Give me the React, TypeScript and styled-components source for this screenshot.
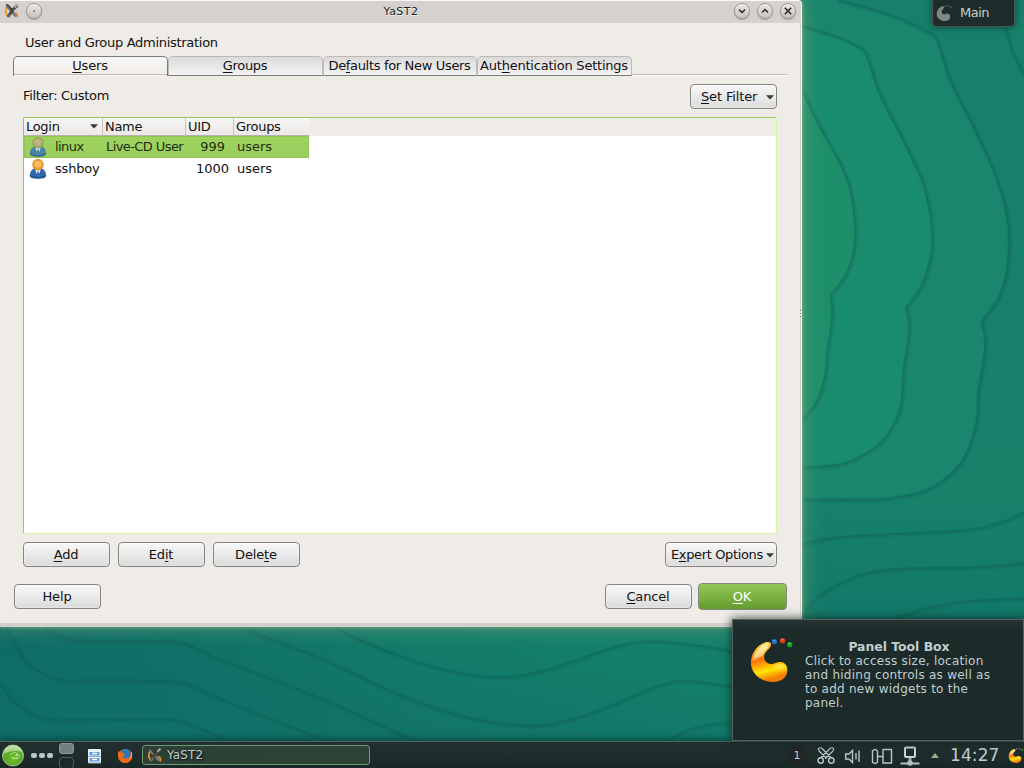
import React from "react";
import styled, { createGlobalStyle, css } from "styled-components";

const Global = createGlobalStyle`
  html, body { margin: 0; padding: 0; }
  body { font-family: "DejaVu Sans", sans-serif; font-size: 13px; overflow: hidden; }
  * { box-sizing: border-box; }
`;

const Desktop = styled.div`
  position: relative;
  width: 1024px;
  height: 768px;
  overflow: hidden;
  background: #137a69;
`;
const Wallpaper = styled.svg`
  position: absolute;
  inset: 0;
  display: block;
`;

/* ---------- window ---------- */
const WindowFrame = styled.section`
  position: absolute;
  left: 0;
  top: 0;
  width: 802px;
  height: 627px;
  display: flex;
  flex-direction: column;
  background: #efebe7;
  border-top: 1px solid #faf9f8;
  border-right: 1px solid #f7f6f4;
  border-radius: 0 4px 3px 0;
  box-shadow: 0 0 4px rgba(160, 195, 135, 0.75), 0 0 20px 1px rgba(135, 165, 130, 0.55);
  color: #111;
`;
const TitleBar = styled.header`
  display: flex;
  align-items: center;
  height: 22px;
  flex: none;
  padding: 0 5px 3px 4px;
  background: #d5d1ce;
  border-radius: 0 3px 0 0;
`;
const TitleText = styled.div`
  flex: 1;
  text-align: center;
  font-size: 11px;
  letter-spacing: 0.5px;
  color: #222;
  text-shadow: 0 1px 0 #f4f2f0;
  padding: 1px 0 0 26px;
`;
const TitleButtons = styled.div`
  display: flex;
  gap: 7px;
`;
const RoundButton = styled.span<{ $menu?: boolean }>`
  width: 16px;
  height: 16px;
  border-radius: 50%;
  display: flex;
  background: linear-gradient(#e9e7e5, #c5c2bf);
  border: 1px solid #9a9896;
  box-shadow: 0 1px 1px rgba(0, 0, 0, 0.25), inset 0 1px 0 #f6f5f4;
  svg { display: block; }
  ${(p) =>
    p.$menu &&
    css`
      margin-left: 6px;
      background: radial-gradient(circle, #777 0 0.6px, transparent 1px), linear-gradient(#e9e7e5, #c5c2bf);
    `}
`;
const WindowBody = styled.div`
  flex: 1;
  border-right: 1px solid #d0cdca;
  padding: 13px 13px 0 13px;
  display: flex;
  flex-direction: column;
`;
const BottomEdge = styled.div`
  height: 4px;
  flex: none;
  background: #d3cfcc;
  border-radius: 0 0 3px 0;
`;
const Heading = styled.div`
  height: 20px;
  line-height: 14px;
  padding-left: 12px;
  letter-spacing: -0.29px;
`;
const TabRow = styled.div`
  display: flex;
  height: 20px;
`;
const Tab = styled.div<{ $active?: boolean; $width: number; $tracking: number }>`
  width: ${(p) => p.$width}px;
  letter-spacing: ${(p) => p.$tracking}px;
  height: 20px;
  line-height: 18px;
  text-align: center;
  white-space: nowrap;
  padding-right: 1px;
  border: 1px solid #bcbab7;
  border-bottom-color: #7d7b7a;
  border-radius: 5px 5px 0 0;
  background: linear-gradient(#dcdbda, #f4f3f3);
  ${(p) =>
    p.$active &&
    css`
      border-color: #7d7b7a;
      border-bottom: 0;
      background: linear-gradient(#f8f7f6, #efebe7);
      box-shadow: inset 0 -1px 0 #f6f4f2, inset 0 -2px 0 #bdbab8;
    `}
`;
const TabLine = styled.div`
  flex: 1;
  align-self: flex-end;
  height: 2px;
  border-top: 1px solid #b8b6b4;
  background: #fff;
`;
const FilterRow = styled.div`
  display: flex;
  justify-content: space-between;
  height: 41px;
  padding: 8px 10px 0;
`;
const FilterText = styled.span`
  line-height: 25px;
  margin-top: -1px;
  letter-spacing: -0.3px;
`;

const Button = styled.button<{ $width?: number; $primary?: boolean; $menu?: boolean }>`
  width: ${(p) => p.$width ?? 87}px;
  height: ${(p) => (p.$primary ? 27 : 25)}px;
  flex: none;
  display: flex;
  align-items: center;
  justify-content: center;
  padding: 0 1px 1px 0;
  font: 13px "DejaVu Sans", sans-serif;
  letter-spacing: -0.15px;
  white-space: nowrap;
  color: #111;
  border: 1px solid #858483;
  border-radius: 4px;
  background: linear-gradient(#f8f8f8, #dcdbdb);
  box-shadow: inset 0 0 0 1px rgba(255, 255, 255, 0.25);
  ${(p) =>
    p.$primary &&
    css`
      color: #fff;
      border-color: #82887c;
      background: linear-gradient(#92ca55, #659c30);
      box-shadow: none;
    `}
  ${(p) =>
    p.$menu &&
    css`
      justify-content: space-between;
      letter-spacing: ${p.$width === 87 ? -0.15 : -0.36}px;
      padding: 0 2px 1px ${p.$width === 87 ? 10 : 5}px;
      svg { margin-top: 2px; }
    `}
`;
const Underlined = styled.span`
  text-decoration: underline;
  text-decoration-thickness: 1px;
  text-underline-offset: 2px;
  text-decoration-skip-ink: none;
`;

const Table = styled.div`
  margin: 0 10px;
  width: 754px;
  height: 417px;
  border: 1px solid #d3f5a0;
  border-top-color: #96cb5a;
  border-left-color: #96cb5a;
  border-radius: 2px;
  background: #fff;
`;
const tableColumns = "79px 83px 48px 75px";
const HeaderRow = styled.div`
  display: grid;
  grid-template-columns: ${tableColumns};
  height: 18px;
  background: #efebe7;
`;
const HeaderCell = styled.div<{ $last?: boolean }>`
  display: flex;
  align-items: center;
  justify-content: space-between;
  padding: 0 4px 0 2px;
  line-height: 16px;
  letter-spacing: -0.3px;
  border-right: ${(p) => (p.$last ? "0" : "1px solid #c6c4c2")};
  border-bottom: 1px solid #b5b3b1;
  background: linear-gradient(#f8f7f6, #ebe8e6);
`;
const DataRow = styled.div<{ $selected?: boolean }>`
  display: grid;
  grid-template-columns: ${tableColumns};
  width: 285px;
  height: 22px;
  line-height: 21px;
  color: ${(p) => (p.$selected ? "#1f3010" : "#111")};
  background: ${(p) => (p.$selected ? "linear-gradient(#9fd360, #9acd5b)" : "#fff")};
  ${(p) => p.$selected && "box-shadow: inset 0 0 0 1px #92c654;"}
`;
const Cell = styled.div<{ $right?: number; $tracking?: number }>`
  display: flex;
  white-space: nowrap;
  justify-content: ${(p) => (p.$right ? "flex-end" : "flex-start")};
  padding-left: 3px;
  padding-right: ${(p) => p.$right ?? 0}px;
  letter-spacing: ${(p) => p.$tracking ?? 0}px;
`;
const IconSlot = styled.span`
  width: 26px;
  margin-left: 2px;
  flex: none;
  svg { display: block; }
`;
const ActionRow = styled.div`
  display: flex;
  gap: 8px;
  padding: 8px 10px 0;
`;
const DialogRow = styled.div`
  display: flex;
  align-items: center;
  height: 27px;
  margin-top: 16px;
  padding-left: 1px;
`;
const OkSlot = styled.span`
  margin-left: 6px;
`;
const Spacer = styled.span`
  flex: 1;
`;
const ResizeGrip = styled.div`
  position: absolute;
  left: 800px;
  top: 309px;
  width: 1px;
  height: 7px;
  background: repeating-linear-gradient(#666 0 1px, #efebe7 1px 3px);
`;

/* ---------- desktop widgets ---------- */
const ActivityTab = styled.div`
  position: absolute;
  left: 932px;
  top: -4px;
  width: 83px;
  height: 31px;
  display: flex;
  align-items: center;
  gap: 7px;
  padding: 2px 0 0 3px;
  letter-spacing: -0.5px;
  color: #c3d0cf;
  background: #1e2c2b;
  border: 1px solid #4a5655;
  border-radius: 4px;
  box-shadow: 0 0 7px rgba(0, 35, 30, 0.6);
`;
const Tooltip = styled.aside`
  position: absolute;
  left: 732px;
  top: 619px;
  width: 292px;
  height: 122px;
  display: flex;
  padding: 16px 30px 0 16px;
  color: #c0cfce;
  background: linear-gradient(#2a3333, #1d2a2a 9px);
  border: 1px solid #53605f;
  box-shadow: 0 0 9px 1px rgba(10, 30, 26, 0.7);
`;
const TooltipText = styled.div`
  width: 188px;
  margin-left: 10px;
  padding-top: 4px;
  font-size: 12px;
  line-height: 14px;
  letter-spacing: 0.25px;
  white-space: nowrap;
`;
const TooltipTitle = styled.div`
  font-weight: bold;
  font-size: 12.4px;
  letter-spacing: 0;
  text-align: center;
`;
const Panel = styled.footer`
  position: absolute;
  left: 0;
  top: 741px;
  width: 1024px;
  height: 27px;
  display: flex;
  align-items: center;
  background: linear-gradient(#223130, #1a2727);
  border-top: 1px solid #52605f;
  box-shadow: 0 -1px 9px rgba(0, 50, 45, 0.8);
  color: #c0cfce;
  svg { display: block; flex: none; }
`;
const TaskButton = styled.div`
  width: 228px;
  height: 20px;
  margin-left: 10px;
  display: flex;
  align-items: center;
  gap: 4px;
  padding-left: 4px;
  font-size: 12px;
  letter-spacing: 0.15px;
  border: 1px solid #6f9972;
  border-radius: 3px;
  background: linear-gradient(90deg, #2d4036, #2f4238);
  text-shadow: 1px 1px 2px #000;
`;
const Pager = styled.div`
  width: 20px;
  height: 20px;
  border-radius: 50%;
  background: #232625;
  font-size: 11px;
  line-height: 20px;
  text-align: center;
  margin: 2px 9px 0 0;
`;
const Clock = styled.span`
  font-size: 17px;
  letter-spacing: 0.1px;
  width: 52px;
  white-space: nowrap;
  line-height: 20px;
  margin: -1px 6px 0 10px;
`;

/* ---------- wallpaper contours ---------- */
type Pt = [number, number];
const spline = (pts: Pt[]) => {
  let d = "";
  for (let i = 0; i < pts.length - 1; i++) {
    const a = pts[Math.max(0, i - 1)];
    const b = pts[i];
    const c = pts[i + 1];
    const e = pts[Math.min(pts.length - 1, i + 2)];
    d += ` C${b[0] + (c[0] - a[0]) / 6} ${b[1] + (c[1] - a[1]) / 6} ${c[0] - (e[0] - b[0]) / 6} ${c[1] - (e[1] - b[1]) / 6} ${c[0]} ${c[1]}`;
  }
  return d;
};
const trace = (...parts: Pt[][]) => `M${parts[0][0].join(" ")}` + parts.map(spline).join("");

const inner = trace(
  [[790, 60], [803, 92], [820, 127], [840, 163], [850, 190], [855, 230], [852, 258], [844, 277], [830, 295]],
  [[830, 295], [832, 316], [827, 353], [825, 375], [817, 400], [803, 419], [790, 430]]
);
const middle = trace(
  [[780, 20], [803, 26], [840, 38], [860, 48], [867, 57], [880, 95], [903, 140], [924, 187], [932, 235], [928, 267], [918, 291], [906, 307]],
  [[906, 307], [909, 330], [903, 373], [901, 403], [892, 427], [876, 446], [850, 461], [825, 466], [790, 467]]
);
const outer = trace(
  [[838, 0], [890, 15], [928, 32], [937, 41], [950, 80], [975, 130], [997, 180], [1008, 225], [1007, 268], [998, 298], [981, 321]],
  [[981, 321], [985, 345], [978, 393], [976, 423], [961, 462], [930, 488], [890, 498], [850, 499], [780, 499]]
);
const lines: string[] = [
  trace([[998, 0], [1005, 27], [1013, 53], [1030, 85]]),
  trace([[790, 548], [802, 544], [840, 537], [930, 532], [973, 529], [1007, 520], [1030, 508]]),
  trace([[795, 624], [802, 613], [827, 590], [867, 573], [913, 568], [980, 567], [1030, 562]]),
  trace([[885, 624], [893, 619], [930, 607], [967, 601], [1030, 598]]),
  trace([[320, 620], [360, 640], [400, 656], [450, 671], [497, 677], [533, 673], [567, 663], [617, 646], [653, 641], [687, 644], [740, 652]]),
  trace([[225, 620], [240, 627], [320, 658], [400, 695], [467, 717], [523, 725], [560, 722], [607, 707], [660, 685], [690, 681], [740, 688]]),
  trace([[40, 622], [50, 632], [67, 639], [87, 641], [150, 641], [183, 643], [217, 658], [320, 698], [400, 734], [420, 742]]),
  trace([[2, 620], [20, 653], [37, 670], [63, 680], [100, 680], [167, 681], [190, 685], [233, 704], [330, 742]]),
  trace([[-5, 678], [17, 704], [47, 719], [100, 719], [157, 719], [187, 723], [230, 742]]),
  trace([[663, 742], [693, 728], [732, 722], [760, 722]]),
];

const Contours = () => (
  <Wallpaper width="1024" height="768">
    <defs>
      <linearGradient id="land" x1="500" y1="620" x2="470" y2="750" gradientUnits="userSpaceOnUse">
        <stop offset="0" stopColor="#14806a" />
        <stop offset=".5" stopColor="#127a69" />
        <stop offset="1" stopColor="#127468" />
      </linearGradient>
      <linearGradient id="west" x1="0" y1="0" x2="420" y2="0" gradientUnits="userSpaceOnUse">
        <stop offset="0" stopColor="#0d6a67" stopOpacity=".75" />
        <stop offset="1" stopColor="#0d6a67" stopOpacity="0" />
      </linearGradient>
      <linearGradient id="east" x1="0" y1="0" x2="0" y2="768" gradientUnits="userSpaceOnUse">
        <stop offset="0" stopColor="#17806b" />
        <stop offset=".65" stopColor="#17816a" />
        <stop offset=".82" stopColor="#127869" />
        <stop offset="1" stopColor="#107068" />
      </linearGradient>
      <filter id="soft" x="0" y="0" width="1024" height="768" filterUnits="userSpaceOnUse">
        <feGaussianBlur stdDeviation="1.1" />
      </filter>
    </defs>
    <rect width="1024" height="768" fill="url(#land)" />
    <rect y="600" width="420" height="168" fill="url(#west)" />
    <rect x="790" width="234" height="768" fill="url(#east)" />
    <path d={`${outer} L780 0Z`} fill="#19866d" />
    <path d={`${middle} Z`} fill="#1a8c6e" />
    <path d={`${inner} Z`} fill="#1d906b" />
    <g fill="none" strokeLinejoin="round">
      <g stroke="#0b564d" strokeWidth="2.2" opacity=".45" filter="url(#soft)" transform="translate(1 1)">
        {[inner, middle, outer, ...lines].map((d, i) => <path key={i} d={d} />)}
      </g>
      <g stroke="#0d6257" strokeWidth="1" opacity=".4">
        {[inner, middle, outer, ...lines].map((d, i) => <path key={i} d={d} />)}
      </g>
    </g>
  </Wallpaper>
);

/* ---------- icons ---------- */
const XIcon = () => (
  <svg width="16" height="16" viewBox="0 0 16 16">
    <path d="M3.500 4Q.5 8 2.500 11L4 14M11.500 9.500q3 1.500 1.500 5" fill="none" stroke="#f3952c" strokeWidth="1.700" />
    <path d="M2.500 2.200l4.500 5 5 6" fill="none" stroke="#77726c" strokeWidth="3" />
    <path d="M13.500 2.200L8.500 7l-4.500 7" fill="none" stroke="#4a4744" strokeWidth="3" />
    <path d="M2 1.500l2.500 1L8 7" fill="none" stroke="#35312e" strokeWidth="1.300" />
    <path d="M13.500 1.700l-3 3" stroke="#b4afa9" strokeWidth="1.800" />
    <path d="M6 11l-1.500 3M10 10l2.500 3.500" stroke="#8f8984" strokeWidth="1" />
  </svg>
);
const ArrowSvg = styled.svg`
  flex: none;
  display: block;
`;
const Arrow = () => (
  <ArrowSvg width="8" height="5" viewBox="0 0 8 5">
    <path d="M0 .3h8L4 4.500z" fill="#3b3b3b" />
  </ArrowSvg>
);
const UserIcon = ({ dim }: { dim?: boolean }) => (
  <svg width="18" height="22" viewBox="0 0 18 22">
    <ellipse cx="9" cy="19.800" rx="7.500" ry="1.500" fill="#000" opacity=".25" />
    <path d="M.8 17.500C1 13.500 3.500 9.500 9 9.500s8 4 8.200 8c0 2-2.700 3-8.200 3s-8.200-1-8.200-3z" fill={dim ? "#4785a6" : "#2f68ac"} />
    <path d="M1.500 17.500q1 2 7.500 2t7.500-2" fill="none" stroke={dim ? "#2f6d92" : "#1a4b8c"} strokeWidth="1.400" />
    <path d="M5.800 10.500h6.400L9 19z" fill={dim ? "#d3e3dc" : "#f0f4fa"} />
    <path d="M9 12l1.200 4.500L9 19l-1.200-2.500z" fill={dim ? "#3f7fa2" : "#2c62a8"} />
    <circle cx="9" cy="6.600" r="5.400" fill={dim ? "#aaa465" : "#ee9a26"} stroke={dim ? "#92a055" : "#d98b26"} strokeWidth=".7" />
    <ellipse cx="9" cy="6.300" rx="3.600" ry="3.300" fill={dim ? "#bdb683" : "#fbc066"} />
  </svg>
);
const Cashew = ({ size, mono }: { size: number; mono?: boolean }) => (
  <svg width={size} height={size} viewBox="0 0 48 48">
    <defs>
      <linearGradient id="cashewFill" x1="0" y1="0" x2=".25" y2="1">
        <stop offset="0" stopColor="#ffee62" />
        <stop offset=".3" stopColor="#ffa51c" />
        <stop offset=".48" stopColor="#fd7208" />
        <stop offset=".78" stopColor="#ffe500" />
        <stop offset="1" stopColor="#f67c08" />
      </linearGradient>
      <linearGradient id="cashewGloss" x1="0" y1="0" x2="0" y2="1">
        <stop offset="0" stopColor="#fff8b0" stopOpacity=".9" />
        <stop offset="1" stopColor="#fff" stopOpacity=".1" />
      </linearGradient>
    </defs>
    <path d="M21 6.500C14 5 2 15 2 28c0 11 10 20 23 20 10 0 15.500-6 15-13.500C39.500 28 33.500 25.500 28 28 21 31.500 14.500 27 16 20c1-5 7-7 7-11 0-1.500-.7-2.300-2-2.500z" fill={mono ? "#7e8786" : "url(#cashewFill)"} />
    {!mono && <path d="M20 7.500C13 9 4 18 4 27c4-6 9-4 11-8 2-4 7-8 5-11.500zM25 31c5-3 13-3 13.500 5-4 2-10-1-13.500-5z" fill="url(#cashewGloss)" />}
    <circle cx="26.500" cy="6" r="2.800" fill={mono ? "#4c5756" : "#2969c4"} />
    <circle cx="35" cy="5" r="2.800" fill={mono ? "#4c5756" : "#da3d19"} />
    <circle cx="42.500" cy="9" r="2.800" fill={mono ? "#4c5756" : "#14a318"} />
    {!mono && <path d="M25.500 5h2M34 4h2M41.500 8h2" stroke="#fff" strokeOpacity=".6" />}
  </svg>
);
const Launcher = () => (
  <svg width="26" height="26" viewBox="0 0 26 26">
    <defs>
      <radialGradient id="suse" cx=".5" cy=".65" r=".6">
        <stop offset="0" stopColor="#6fbd28" />
        <stop offset=".7" stopColor="#58a626" />
        <stop offset="1" stopColor="#a4cf82" />
      </radialGradient>
    </defs>
    <circle cx="13" cy="13.500" r="10.500" fill="url(#suse)" stroke="#bcd8a6" strokeWidth=".8" />
    <path d="M4 11.500Q6 3.500 13 3.500t8.500 6Q13 8 4 11.500z" fill="#d9edca" opacity=".6" />
    <path d="M10 12.500q5-3.500 8.500-.5 2 3-.5 4.500-3 1-6.500-1 3 1 6.500.3" fill="none" stroke="#b6df94" strokeWidth="1" />
    <circle cx="16.500" cy="13" r="1.100" fill="#d3ecbc" />
  </svg>
);
const QuickLaunch = () => (
  <svg width="106" height="26" viewBox="26 742 106 26">
    <g fill="#b9c7c6">
      <rect x="31" y="753" width="6" height="5" rx="2" />
      <rect x="39" y="753" width="6" height="5" rx="2" />
      <rect x="47" y="753" width="6" height="5" rx="2" />
    </g>
    <rect x="59.500" y="743.500" width="14" height="10" rx="2.500" fill="#728180" stroke="#8d9a99" />
    <rect x="59.500" y="757.500" width="14" height="11" rx="3" fill="#1c2928" stroke="#536160" />
    <rect x="88" y="749" width="13" height="14" rx="1" fill="#edf3f9" />
    <path d="M89.500 752h10v3.500h-10zM89.500 758h10v3.500h-10z" fill="#5c9be0" />
    <path d="M88 756.500h13M88 763h13" stroke="#98a8b8" />
    <path d="M92 753.500h5M92 759.500h5" stroke="#fff" strokeWidth="1.500" />
    <circle cx="125" cy="756" r="7" fill="#e35c12" />
    <circle cx="125.500" cy="754" r="5.200" fill="#2c77b8" />
    <path d="M118.500 751c-2 7 2 12 6.500 12 5 0 8-4 7-9-1 3-3 4.500-6 4.500-2 0-3.500-1-3.500-2.500l2.500-1c-.5-2-3-1.500-3.500-3-1-.2-2-.2-3-1z" fill="#ec6a16" />
    <path d="M130 750q3 5-1 9 4-1 3-6z" fill="#ffc63a" />
  </svg>
);
const TrayIcons = () => (
  <svg width="124" height="26" viewBox="816 742 124 26" fill="none" stroke="#b8c7c5" strokeWidth="1.400">
    <path d="M818.500 748.500q2-1.500 3.500 0l9.500 9.500M833.500 748.500q-2-1.500-3.500 0l-9.500 9.500M818.500 748.500q-.5 1.500 1 3l7.500 7M833.500 748.500q.5 1.500-1 3l-7.500 7" strokeWidth="1.200" />
    <circle cx="820.700" cy="760.500" r="2.700" />
    <circle cx="831.300" cy="760.500" r="2.700" />
    <path d="M845.700 754h3.300l3.500-3.500v12l-3.500-3.500h-3.300z" />
    <path d="M856 753v6.500M859 750.500v11.500" />
    <path d="M872.500 751q2.500-3 5 0v11q-2.500 3-5 0zM877.500 756.500h5M883 749.500h8.500v13.500h-8.500z" />
    <rect x="905" y="747.500" width="10" height="9.500" rx="1" stroke="#cbd4d3" strokeWidth="2" />
    <path d="M910 758v5" stroke="#9ba7a6" strokeWidth="3" />
    <path d="M900.500 763.500h19" stroke="#b8c1c0" strokeWidth="2" />
    <circle cx="910" cy="763" r="2.700" fill="#b6bfbe" stroke="none" />
    <path d="M931 758h8l-4-5z" fill="#8db584" stroke="none" />
  </svg>
);

const Mnemonic = ({ text, at }: { text: string; at: number }) => (
  <span>
    {text.slice(0, at)}
    <Underlined>{text[at]}</Underlined>
    {text.slice(at + 1)}
  </span>
);

const users = [
  { login: "linux", name: "Live-CD User", uid: "999", groups: "users", selected: true },
  { login: "sshboy", name: "", uid: "1000", groups: "users", selected: false },
];
const tabs = [
  { text: "Users", at: 0, width: 155, tracking: -0.2 },
  { text: "Groups", at: 0, width: 155, tracking: -0.35 },
  { text: "Defaults for New Users", at: 2, width: 154, tracking: -0.33 },
  { text: "Authentication Settings", at: 3, width: 155, tracking: -0.22 },
];
const titleGlyphs = ["M4 5.500l3 3 3-3", "M4 8.500l3-3 3 3", "M3.800 3.800l6.400 6.400M10.200 3.800l-6.400 6.400"];

export default function App() {
  return (
    <Desktop>
      <Global />
      <Contours />
      <WindowFrame>
        <TitleBar>
          <XIcon />
          <RoundButton $menu />
          <TitleText>YaST2</TitleText>
          <TitleButtons>
            {titleGlyphs.map((d) => (
              <RoundButton key={d}>
                <svg width="14" height="14" viewBox="0 0 14 14">
                  <path d={d} fill="none" stroke="#222" strokeWidth="1.400" />
                </svg>
              </RoundButton>
            ))}
          </TitleButtons>
        </TitleBar>
        <WindowBody>
          <Heading>User and Group Administration</Heading>
          <TabRow>
            {tabs.map((t, i) => (
              <Tab key={t.text} $active={i === 0} $width={t.width} $tracking={t.tracking}>
                <Mnemonic text={t.text} at={t.at} />
              </Tab>
            ))}
            <TabLine />
          </TabRow>
          <FilterRow>
            <FilterText>Filter: Custom</FilterText>
            <Button $menu $width={87}>
              <Mnemonic text="Set Filter" at={0} />
              <Arrow />
            </Button>
          </FilterRow>
          <Table>
            <HeaderRow>
              <HeaderCell>Login<Arrow /></HeaderCell>
              <HeaderCell>Name</HeaderCell>
              <HeaderCell>UID</HeaderCell>
              <HeaderCell $last>Groups</HeaderCell>
            </HeaderRow>
            {users.map((u) => (
              <DataRow key={u.login} $selected={u.selected}>
                <Cell $tracking={u.selected ? -0.55 : -0.2}>
                  <IconSlot><UserIcon dim={u.selected} /></IconSlot>
                  {u.login}
                </Cell>
                <Cell $tracking={-0.58}>{u.name}</Cell>
                <Cell $right={u.selected ? 9 : 5}>{u.uid}</Cell>
                <Cell>{u.groups}</Cell>
              </DataRow>
            ))}
          </Table>
          <ActionRow>
            <Button><Mnemonic text="Add" at={0} /></Button>
            <Button><Mnemonic text="Edit" at={2} /></Button>
            <Button><Mnemonic text="Delete" at={4} /></Button>
            <Spacer />
            <Button $menu $width={112}>
              <Mnemonic text="Expert Options" at={1} />
              <Arrow />
            </Button>
          </ActionRow>
          <DialogRow>
            <Button>Help</Button>
            <Spacer />
            <Button><Mnemonic text="Cancel" at={0} /></Button>
            <OkSlot>
              <Button $primary $width={89}><Mnemonic text="OK" at={0} /></Button>
            </OkSlot>
          </DialogRow>
        </WindowBody>
        <BottomEdge />
        <ResizeGrip />
      </WindowFrame>

      <ActivityTab>
        <Cashew size={17} mono />
        Main
      </ActivityTab>

      <Panel>
        <Launcher />
        <QuickLaunch />
        <TaskButton><XIcon />YaST2</TaskButton>
        <Spacer />
        <Pager>1</Pager>
        <TrayIcons />
        <Clock>14:27</Clock>
        <Cashew size={16} />
      </Panel>

      <Tooltip>
        <Cashew size={46} />
        <TooltipText>
          <TooltipTitle>Panel Tool Box</TooltipTitle>
          Click to access size, location<br />
          and hiding controls as well as<br />
          to add new widgets to the<br />
          panel.
        </TooltipText>
      </Tooltip>
    </Desktop>
  );
}
